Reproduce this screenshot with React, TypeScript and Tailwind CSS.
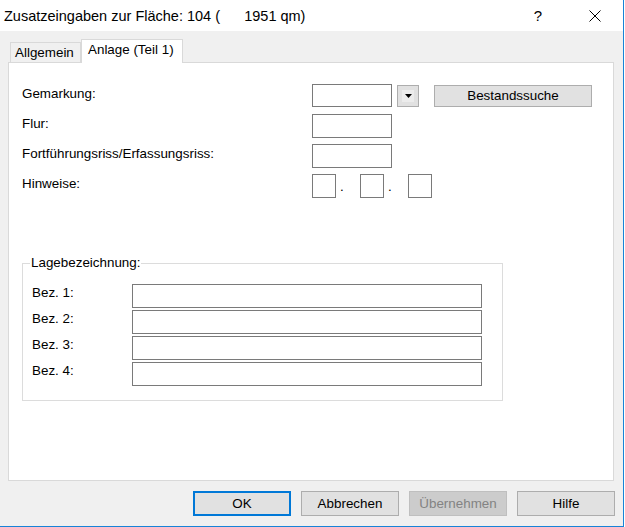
import React from "react";

function TextBox({ className = "" }: { className?: string }) {
  return <div className={`bg-white border border-[#7a7a7a] ${className}`} />;
}

function DlgButton({ label, primary, disabled }: { label: string; primary?: boolean; disabled?: boolean }) {
  const look = primary
    ? "border-2 border-[#0078d7] bg-[#e1e1e1] text-black"
    : disabled
    ? "border border-[#bfbfbf] bg-[#cccccc] text-[#838383]"
    : "border border-[#adadad] bg-[#e1e1e1] text-black";
  return (
    <div className={`w-[98px] h-[25px] flex items-center justify-center ${look}`}>{label}</div>
  );
}

export default function App() {
  const rows = ["Flur:", "Fortführungsriss/Erfassungsriss:"];

  return (
    <div className="w-[624px] h-[527px] bg-[#f0f0f0] border-r border-b border-[#1883d7] flex flex-col font-['Liberation_Sans',Arial,sans-serif] text-[13.4px] leading-[16px] text-black">
      {/* ── TITLE BAR ── */}
      <div className="h-[31px] bg-white flex items-center pl-[4px] shrink-0">
        <span className="text-[14.5px] whitespace-pre text-[#000]">Zusatzeingaben zur Fläche: 104 (      1951 qm)</span>
        <span className="ml-auto text-[15px] mr-[47px]">?</span>
        <svg width="12" height="12" viewBox="0 0 12 12" className="mr-[22px]">
          <path d="M0.5 0.5 L11.5 11.5 M11.5 0.5 L0.5 11.5" stroke="#000" strokeWidth="1" />
        </svg>
      </div>

      {/* ── TABS ── */}
      <div className="mt-[8px] ml-[10px] h-[23px] flex items-end shrink-0">
        <div className="h-[20px] w-[71px] border border-b-0 border-[#d9d9d9] bg-[#f0f0f0] pl-[4px] pt-[2px]">Allgemein</div>
        <div className="relative z-10 -mb-px h-[24px] w-[102px] border border-b-0 border-[#d9d9d9] bg-white pl-[6px] pt-[2px]">
          Anlage (Teil 1)
        </div>
      </div>

      {/* ── PANEL ── */}
      <div className="ml-[8px] w-[606px] h-[419px] bg-white border border-[#d9d9d9] pt-[21px] pl-[13px] shrink-0">
        <div className="flex flex-col gap-[7px]">
          <div className="flex items-start h-[23px]">
            <span className="w-[290px] pt-[2px]">Gemarkung:</span>
            <TextBox className="w-[80px] h-[23px]" />
            <div className="ml-[5px] mt-[1px] w-[22px] h-[22px] bg-[#e1e1e1] border border-[#adadad] flex items-center justify-center">
              <div className="w-[12px] h-[12px] bg-[#ececec] flex items-center justify-center">
                <svg width="7" height="4" viewBox="0 0 7 4">
                  <path d="M0 0 H7 L3.5 4 Z" fill="#000" />
                </svg>
              </div>
            </div>
            <div className="ml-[15px] mt-[1px] w-[158px] h-[22px] bg-[#e1e1e1] border border-[#adadad] flex items-center justify-center">
              Bestandssuche
            </div>
          </div>
          {rows.map((r) => (
            <div key={r} className="flex items-start h-[23px]">
              <span className="w-[290px] pt-[2px]">{r}</span>
              <TextBox className="w-[80px] h-[24px]" />
            </div>
          ))}
          <div className="flex items-start h-[24px]">
            <span className="w-[290px] pt-[2px]">Hinweise:</span>
            <TextBox className="w-[24px] h-[24px]" />
            <span className="w-[24px] pl-[4px] pt-[5px]">.</span>
            <TextBox className="w-[24px] h-[24px]" />
            <span className="w-[24px] pl-[4px] pt-[5px]">.</span>
            <TextBox className="w-[24px] h-[24px]" />
          </div>
        </div>

        {/* ── LAGEBEZEICHNUNG ── */}
        <fieldset className="mt-[57px] w-[481px] border border-[#dcdcdc] pl-[9px] pb-[14px]">
          <legend className="ml-[-2px] px-[1px]">Lagebezeichnung:</legend>
          <div className="mt-[13px] flex flex-col gap-[2px]">
            {[1, 2, 3, 4].map((n) => (
              <div key={n} className="flex items-start">
                <span className="w-[100px] pt-[1px]">Bez. {n}:</span>
                <TextBox className="w-[350px] h-[24px]" />
              </div>
            ))}
          </div>
        </fieldset>
      </div>

      {/* ── BUTTONS ── */}
      <div className="mt-[10px] flex justify-end gap-[10px] pr-[8px]">
        <DlgButton label="OK" primary />
        <DlgButton label="Abbrechen" />
        <DlgButton label="Übernehmen" disabled />
        <DlgButton label="Hilfe" />
      </div>
    </div>
  );
}
